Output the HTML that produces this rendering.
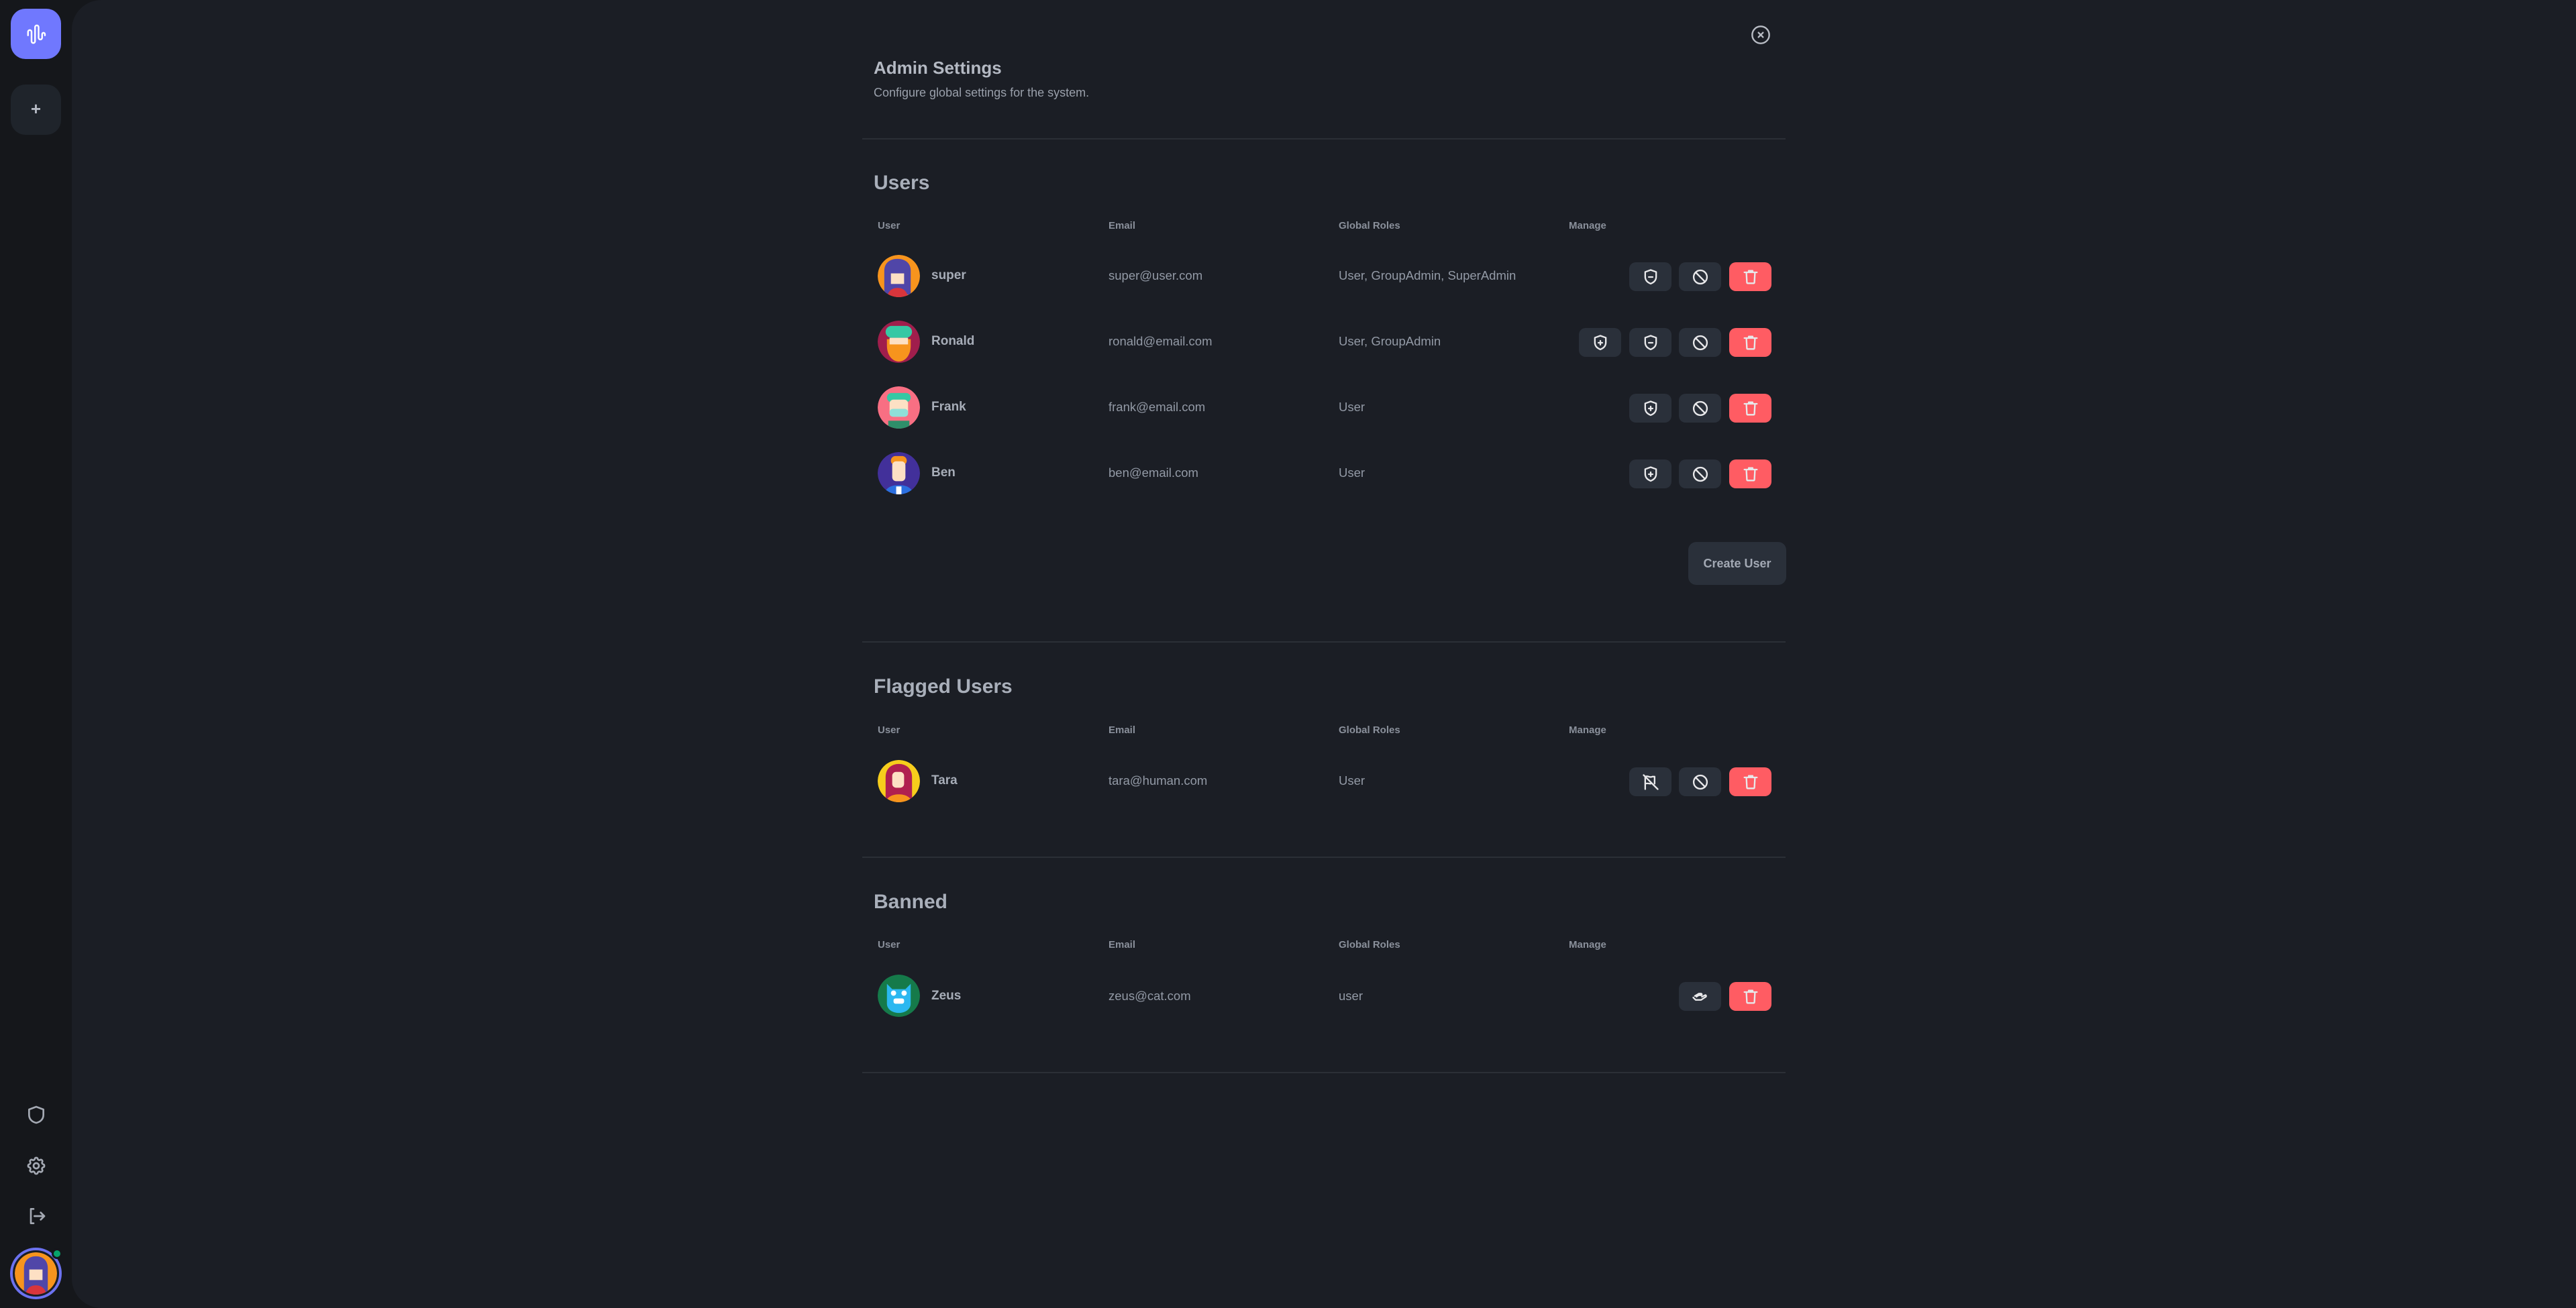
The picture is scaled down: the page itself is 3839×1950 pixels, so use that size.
<!DOCTYPE html>
<html><head><meta charset="utf-8"><style>
*{margin:0;padding:0;box-sizing:border-box}
body{width:3839px;height:1950px;background:#15171b;font-family:"Liberation Sans",sans-serif;position:relative;overflow:hidden}
.main{position:absolute;left:107px;top:0;right:0;bottom:0;background:#1b1e25;border-radius:44px 0 0 44px}
.a{position:absolute;white-space:nowrap}
.t{color:#b4b9c3;font-weight:bold}
.h{color:#a9afba;font-weight:bold;font-size:30px}
.hd{color:#8a909b;font-size:15px;font-weight:bold}
.nm{color:#a7adb8;font-weight:bold;font-size:19px}
.em{color:#939aa6;font-size:18.5px}
.div{position:absolute;left:1285px;width:1376px;height:2px;background:#2b2f36}
.btn{position:absolute;width:63px;height:43px;border-radius:10px;background:#2a303a;display:flex;align-items:center;justify-content:center}
.btn.r{background:#ff5c63}
.btn svg{width:28px;height:28px;fill:none;stroke:#e8e8ea;stroke-width:2;stroke-linecap:round;stroke-linejoin:round}
.av{position:absolute;width:63px;height:63px;border-radius:50%;overflow:hidden}
.sb svg{position:absolute;fill:none;stroke:#a4a9b3;stroke-width:2;stroke-linecap:round;stroke-linejoin:round}
</style></head><body>
<div class="main"></div>
<!-- sidebar -->
<div class="a" style="left:16px;top:13px;width:75px;height:75px;border-radius:22px;background:#7078fe"></div>
<svg class="a" style="left:33px;top:30px" width="42" height="42" viewBox="0 0 24 24" fill="none" stroke="#fff" stroke-width="1.4" stroke-linecap="round"><path d="M5 13v-3a1.5 1.5 0 0 1 3 0v8a1.5 1.5 0 0 0 3 0V6a1.5 1.5 0 0 1 3 0v9a1.5 1.5 0 0 0 3 0v-3a1.2 1.2 0 0 1 2.4 0v1"/></svg>
<div class="a" style="left:16px;top:126px;width:75px;height:75px;border-radius:22px;background:#1f242b;color:#b4b9c3;font-size:26px;font-weight:bold;text-align:center;line-height:72px">+</div>
<div class="sb">
<svg style="left:38px;top:1646px" width="32" height="32" viewBox="0 0 24 24"><path d="M12 3l8 3v6c0 5-3.5 8-8 9-4.5-1-8-4-8-9V6z"/></svg>
<svg style="left:38px;top:1722px" width="32" height="32" viewBox="0 0 24 24"><path d="M10.3 4.3c.4-1.8 3-1.8 3.4 0a1.7 1.7 0 0 0 2.6 1.1c1.5-.9 3.3.8 2.4 2.4a1.7 1.7 0 0 0 1 2.5c1.8.4 1.8 3 0 3.4a1.7 1.7 0 0 0-1 2.6c.9 1.5-.9 3.3-2.4 2.4a1.7 1.7 0 0 0-2.6 1c-.4 1.8-3 1.8-3.4 0a1.7 1.7 0 0 0-2.6-1c-1.5.9-3.3-.9-2.4-2.4a1.7 1.7 0 0 0-1-2.6c-1.8-.4-1.8-3 0-3.4a1.7 1.7 0 0 0 1-2.5c-.9-1.6.9-3.3 2.4-2.4a1.7 1.7 0 0 0 2.6-1.1z"/><circle cx="12" cy="12" r="3"/></svg>
<svg style="left:38px;top:1797px" width="32" height="32" viewBox="0 0 24 24"><path d="M9 4H6v16h3M10 12h11M17 8l4 4-4 4"/></svg>
</div>
<div class="a" style="left:15px;top:1860px;width:77px;height:77px;border-radius:50%;border:4px solid #6c72f0;background:#1b1e25;padding:3px">
<svg width="63" height="63" viewBox="0 0 64 64" style="display:block;border-radius:50%"><circle cx="32" cy="32" r="32" fill="#f7941d"/><path d="M14 60V24c0-12 8-18 18-18s18 6 18 18v36z" fill="#5046a8"/><rect x="22" y="26" width="20" height="16" fill="#fde0c4"/><path d="M16 64c2-10 8-14 16-14s14 4 16 14z" fill="#d9353c"/></svg></div>
<div class="a" style="left:77px;top:1861px;width:16px;height:16px;border-radius:50%;background:#07a26b;border:3px solid #15171b"></div>

<!-- close -->
<svg class="a" style="left:2608px;top:36px" width="32" height="32" viewBox="0 0 24 24" fill="none" stroke="#b8bcc4" stroke-width="1.8" stroke-linecap="round"><circle cx="12" cy="12" r="9.5"/><path d="M9.5 9.5l5 5M14.5 9.5l-5 5"/></svg>

<div class="a t" style="left:1302px;top:86px;font-size:26px">Admin Settings</div>
<div class="a" style="left:1302px;top:128px;font-size:18px;color:#9aa0ab">Configure global settings for the system.</div>
<div class="div" style="top:206px"></div>

<div class="a h" style="left:1302px;top:256px">Users</div>
<div class="a hd" style="left:1308px;top:328px">User</div><div class="a hd" style="left:1652px;top:328px">Email</div><div class="a hd" style="left:1995px;top:328px">Global Roles</div><div class="a hd" style="left:2338px;top:328px">Manage</div>

<svg width="0" height="0" style="position:absolute"><defs>
<symbol id="sm" viewBox="0 0 24 24"><path d="M12 3l7 2.5v6c0 4.5-3 7.5-7 9-4-1.5-7-4.5-7-9v-6z"/><path d="M9.5 12h5"/></symbol>
<symbol id="sp" viewBox="0 0 24 24"><path d="M12 3l7 2.5v6c0 4.5-3 7.5-7 9-4-1.5-7-4.5-7-9v-6z"/><path d="M9.5 12h5M12 9.5v5"/></symbol>
<symbol id="ban" viewBox="0 0 24 24"><circle cx="12" cy="12" r="8.5"/><path d="M6 6l12 12"/></symbol>
<symbol id="tr" viewBox="0 0 24 24"><path d="M4 6h16M9.5 6V4h5v2M6.5 6l.7 13a1 1 0 0 0 1 1h7.6a1 1 0 0 0 1-1l.7-13"/></symbol>
<symbol id="fl" viewBox="0 0 24 24"><path d="M5 21V5M5 5c3-2 6 2 9 0l3 0v9M5 14c3-1 5 0 7 0M3 3l18 18"/></symbol>
<symbol id="hd" viewBox="0 0 24 24"><path d="M3 13l3 3h7l6-4c1-1 0-2.5-1-2l-4 2M9 10h4c1 0 1.5-1.5 0-2h-3l-5 3M7 12l6-4"/></symbol>
</defs></svg>

<!-- super -->
<div class="av" style="left:1308px;top:380px"><svg width="63" height="63" viewBox="0 0 64 64"><circle cx="32" cy="32" r="32" fill="#f7941d"/><path d="M10 60V24c0-12 9-18 20-18s20 6 20 18v36z" fill="#5046a8"/><rect x="20" y="28" width="20" height="16" fill="#fde0c4"/><path d="M14 64c2-10 8-14 16-14s14 4 16 14z" fill="#d9353c"/></svg></div>
<div class="a nm" style="left:1388px;top:400px">super</div>
<div class="a em" style="left:1652px;top:400px">super@user.com</div>
<div class="a em" style="left:1995px;top:400px">User, GroupAdmin, SuperAdmin</div>
<div class="btn" style="left:2428px;top:391px"><svg><use href="#sm"/></svg></div>
<div class="btn" style="left:2502px;top:391px"><svg><use href="#ban"/></svg></div>
<div class="btn r" style="left:2577px;top:391px"><svg><use href="#tr"/></svg></div>

<!-- Ronald -->
<div class="av" style="left:1308px;top:478px"><svg width="63" height="63" viewBox="0 0 64 64"><circle cx="32" cy="32" r="32" fill="#a01e4c"/><rect x="12" y="8" width="40" height="18" rx="9" fill="#36c8a4"/><path d="M14 28h36v10c0 14-8 24-18 24s-18-10-18-24z" fill="#f7941d"/><rect x="18" y="26" width="28" height="10" fill="#fde0c4"/></svg></div>
<div class="a nm" style="left:1388px;top:498px">Ronald</div>
<div class="a em" style="left:1652px;top:498px">ronald@email.com</div>
<div class="a em" style="left:1995px;top:498px">User, GroupAdmin</div>
<div class="btn" style="left:2353px;top:489px"><svg><use href="#sp"/></svg></div>
<div class="btn" style="left:2428px;top:489px"><svg><use href="#sm"/></svg></div>
<div class="btn" style="left:2502px;top:489px"><svg><use href="#ban"/></svg></div>
<div class="btn r" style="left:2577px;top:489px"><svg><use href="#tr"/></svg></div>

<!-- Frank -->
<div class="av" style="left:1308px;top:576px"><svg width="63" height="63" viewBox="0 0 64 64"><circle cx="32" cy="32" r="32" fill="#f86f83"/><rect x="14" y="10" width="36" height="14" rx="7" fill="#36c8a4"/><rect x="18" y="20" width="28" height="26" rx="6" fill="#fde0c4"/><rect x="18" y="34" width="28" height="12" rx="5" fill="#8fe0d8"/><path d="M16 64v-12h32v12z" fill="#2e8f6a"/></svg></div>
<div class="a nm" style="left:1388px;top:596px">Frank</div>
<div class="a em" style="left:1652px;top:596px">frank@email.com</div>
<div class="a em" style="left:1995px;top:596px">User</div>
<div class="btn" style="left:2428px;top:587px"><svg><use href="#sp"/></svg></div>
<div class="btn" style="left:2502px;top:587px"><svg><use href="#ban"/></svg></div>
<div class="btn r" style="left:2577px;top:587px"><svg><use href="#tr"/></svg></div>

<!-- Ben -->
<div class="av" style="left:1308px;top:674px"><svg width="63" height="63" viewBox="0 0 64 64"><circle cx="32" cy="32" r="32" fill="#42309a"/><rect x="20" y="6" width="24" height="14" rx="7" fill="#f7941d"/><rect x="22" y="14" width="20" height="30" rx="6" fill="#fde0c4"/><path d="M10 64c2-10 10-14 22-14s20 4 22 14z" fill="#2b6fe0"/><rect x="28" y="52" width="8" height="12" fill="#fff"/></svg></div>
<div class="a nm" style="left:1388px;top:694px">Ben</div>
<div class="a em" style="left:1652px;top:694px">ben@email.com</div>
<div class="a em" style="left:1995px;top:694px">User</div>
<div class="btn" style="left:2428px;top:685px"><svg><use href="#sp"/></svg></div>
<div class="btn" style="left:2502px;top:685px"><svg><use href="#ban"/></svg></div>
<div class="btn r" style="left:2577px;top:685px"><svg><use href="#tr"/></svg></div>

<div class="a" style="left:2516px;top:808px;width:146px;height:64px;border-radius:12px;background:#2a303a;color:#a3a9b4;font-weight:bold;font-size:18px;text-align:center;line-height:64px">Create User</div>

<div class="div" style="top:956px"></div>
<div class="a h" style="left:1302px;top:1007px">Flagged Users</div>
<div class="a hd" style="left:1308px;top:1080px">User</div><div class="a hd" style="left:1652px;top:1080px">Email</div><div class="a hd" style="left:1995px;top:1080px">Global Roles</div><div class="a hd" style="left:2338px;top:1080px">Manage</div>
<div class="av" style="left:1308px;top:1133px"><svg width="63" height="63" viewBox="0 0 64 64"><circle cx="32" cy="32" r="32" fill="#f6cd1c"/><path d="M12 60V26c0-14 10-20 20-20s20 6 20 20v34z" fill="#b0204f"/><rect x="22" y="18" width="18" height="24" rx="6" fill="#fde0c4"/><path d="M12 64c2-8 10-12 20-12s18 4 20 12z" fill="#f7941d"/></svg></div>
<div class="a nm" style="left:1388px;top:1153px">Tara</div>
<div class="a em" style="left:1652px;top:1153px">tara@human.com</div>
<div class="a em" style="left:1995px;top:1153px">User</div>
<div class="btn" style="left:2428px;top:1144px"><svg><use href="#fl"/></svg></div>
<div class="btn" style="left:2502px;top:1144px"><svg><use href="#ban"/></svg></div>
<div class="btn r" style="left:2577px;top:1144px"><svg><use href="#tr"/></svg></div>

<div class="div" style="top:1277px"></div>
<div class="a h" style="left:1302px;top:1328px">Banned</div>
<div class="a hd" style="left:1308px;top:1400px">User</div><div class="a hd" style="left:1652px;top:1400px">Email</div><div class="a hd" style="left:1995px;top:1400px">Global Roles</div><div class="a hd" style="left:2338px;top:1400px">Manage</div>
<div class="av" style="left:1308px;top:1453px"><svg width="63" height="63" viewBox="0 0 64 64"><circle cx="32" cy="32" r="32" fill="#157a4a"/><path d="M14 14l8 8h20l8-8v30c0 8-8 14-18 14s-18-6-18-14z" fill="#2bb8f0"/><rect x="24" y="36" width="16" height="8" rx="3" fill="#fff"/><circle cx="24" cy="28" r="4" fill="#fff"/><circle cx="40" cy="28" r="4" fill="#fff"/></svg></div>
<div class="a nm" style="left:1388px;top:1474px">Zeus</div>
<div class="a em" style="left:1652px;top:1474px">zeus@cat.com</div>
<div class="a em" style="left:1995px;top:1474px">user</div>
<div class="btn" style="left:2502px;top:1464px"><svg><use href="#hd"/></svg></div>
<div class="btn r" style="left:2577px;top:1464px"><svg><use href="#tr"/></svg></div>
<div class="div" style="top:1598px"></div>
</body></html>
